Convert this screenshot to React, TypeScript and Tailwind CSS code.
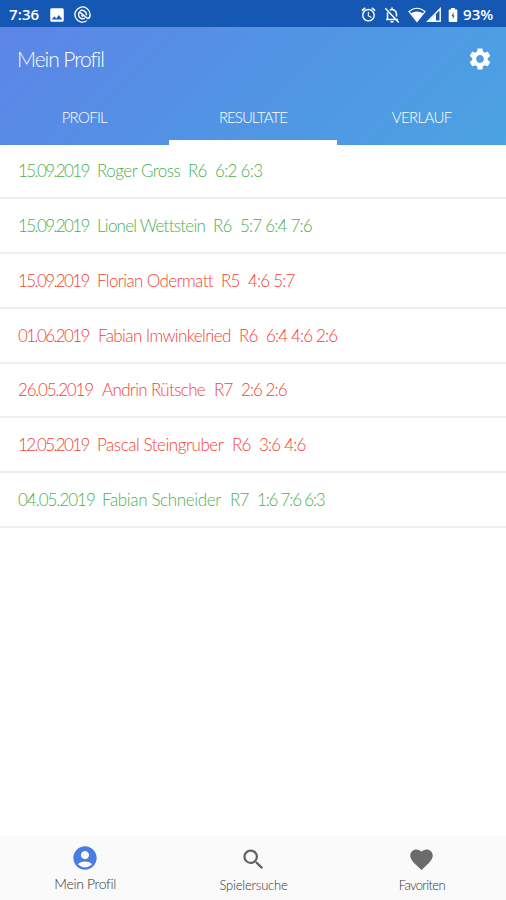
import clsx from 'clsx';
import {
  MdAccountCircle,
  MdAlarm,
  MdFavorite,
  MdImage,
  MdSearch,
  MdSettings,
} from 'react-icons/md';

interface Result {
  date: string;
  name: string;
  rank: string;
  score: string;
  won: boolean;
  // Column width and tracking, the row is set as running text
  dateClass: string;
  nameClass: string;
  scoreClass: string;
}

const results: Result[] = [
  { date: '15.09.2019', name: 'Roger Gross', rank: 'R6', score: '6:2 6:3', won: true, dateClass: 'w-[79px] tracking-[-1.6px]', nameClass: 'w-[91px] tracking-[-0.5px]', scoreClass: 'tracking-[-0.7px]' },
  { date: '15.09.2019', name: 'Lionel Wettstein', rank: 'R6', score: '5:7 6:4 7:6', won: true, dateClass: 'w-[79px] tracking-[-1.6px]', nameClass: 'w-[116px] tracking-[-0.75px]', scoreClass: 'tracking-[-0.8px]' },
  { date: '15.09.2019', name: 'Florian Odermatt', rank: 'R5', score: '4:6 5:7', won: false, dateClass: 'w-[79px] tracking-[-1.6px]', nameClass: 'w-[124px] tracking-[-0.6px]', scoreClass: 'tracking-[-0.8px]' },
  { date: '01.06.2019', name: 'Fabian Imwinkelried', rank: 'R6', score: '6:4 4:6 2:6', won: false, dateClass: 'w-[80px] tracking-[-1.6px]', nameClass: 'w-[141px] tracking-[-0.6px]', scoreClass: 'tracking-[-0.85px]' },
  { date: '26.05.2019', name: 'Andrin Rütsche', rank: 'R7', score: '2:6 2:6', won: false, dateClass: 'w-[84px] tracking-[-1.2px]', nameClass: 'w-[112px] tracking-[-0.65px]', scoreClass: 'tracking-[-0.95px]' },
  { date: '12.05.2019', name: 'Pascal Steingruber', rank: 'R6', score: '3:6 4:6', won: false, dateClass: 'w-[79px] tracking-[-1.6px]', nameClass: 'w-[135px] tracking-[-0.45px]', scoreClass: 'tracking-[-0.8px]' },
  { date: '04.05.2019', name: 'Fabian Schneider', rank: 'R7', score: '1:6 7:6 6:3', won: true, dateClass: 'w-[84px] tracking-[-1px]', nameClass: 'w-[128px] tracking-[-0.35px]', scoreClass: 'tracking-[-1.2px]' },
];

function StatusBar() {
  return (
    <div className="flex h-[27px] items-center bg-[#1558b3] pt-0.5 pl-[9px] pr-[11px] font-['Open_Sans',sans-serif] text-[15px] font-semibold text-white">
      <span className="w-[39px] tracking-[0.1px]">7:36</span>
      <MdImage className="size-[18px]" />
      <svg viewBox="0 0 18 18" className="ml-2 size-[17px]" fill="none" stroke="currentColor">
        <path d="M13.5 15.6A8 8 0 1 1 16.9 8" strokeWidth="1.4" />
        <path d="M16.9 8c.4 3-1 5-2.4 5.3L5.4 6M5 6.5v4a4.2 4.2 0 0 0 6.5 2.2M6.3 5A4.8 4.8 0 0 1 13.2 9.8" strokeWidth="1.5" />
        <path d="m7.8 9.8 2 1.5" strokeWidth="1.6" />
      </svg>
      <MdAlarm className="ml-auto size-[17px]" />
      <svg viewBox="0 0 24 24" className="ml-[6px] size-[18px]" fill="none" stroke="currentColor" strokeWidth="2">
        <path d="M6 8.5V18h12M9 5.5a6 6 0 0 1 9 5V14M4 18h16M3 3l18 19" />
        <path d="M10 21h4M12 2v3" />
      </svg>
      <svg viewBox="0 0 18 16" className="ml-[7px] h-4 w-[18px]">
        <path d="M1 4.5Q9-2 17 4.5L9 14.5Z" fill="none" stroke="currentColor" strokeWidth="1.1" />
        <path d="M2.8 6.2Q9 3 15.2 6.2L9 14.5Z" fill="currentColor" />
      </svg>
      <svg viewBox="0 0 16 16" className="size-4" fill="none" stroke="currentColor" strokeWidth="1.4">
        <path d="M1.8 14.2 14.2 1.8v12.4Z" />
        <path d="M3 14 10 7v7Z" fill="currentColor" stroke="none" />
      </svg>
      <svg viewBox="0 0 10 16" className="ml-[6px] h-4 w-[10px]">
        <path fill="currentColor" d="M3 1h4v1.5h1.5q.8 0 .8.8v11q0 .8-.8.8h-7q-.8 0-.8-.8v-11q0-.8.8-.8H3Z" />
        <path fill="#1558b3" d="M5.4 5 3.6 9.3h1.2v3L6.6 8.4H5.4Z" />
      </svg>
      <span className="ml-[5px] w-[32px] tracking-[0.1px]">93%</span>
    </div>
  );
}

function Header() {
  return (
    <header className="flex h-[117.5px] flex-col bg-[linear-gradient(135deg,#5c85e7_0%,#5194e4_50%,#4ba3e2_100%)] text-white">
      <div className="flex h-[63px] items-center justify-between pl-[17px] pr-[13px]">
        <h1 className="text-[21px] font-light tracking-[-1.05px]">Mein Profil</h1>
        <MdSettings className="size-[26px]" />
      </div>
      <nav className="grid flex-1 grid-cols-3 text-[15px] font-light">
        <div className="flex items-center justify-center tracking-[-0.7px]">PROFIL</div>
        <div className="flex items-center justify-center border-b-[5px] border-white pt-[5px] tracking-[-0.95px]">RESULTATE</div>
        <div className="flex items-center justify-center tracking-[-0.6px]">VERLAUF</div>
      </nav>
    </header>
  );
}

function ResultRow({ result }: { result: Result }) {
  return (
    <li
      className={clsx(
        'flex h-[54.8px] items-center border-b-2 border-[#eeeeee] pl-[18px] text-[17px] font-light whitespace-pre',
        result.won ? 'text-[#4caf50]' : 'text-[#f44336]'
      )}
    >
      <span className={result.dateClass}>{result.date}</span>
      <span className={result.nameClass}>{result.name}</span>
      <span className="w-[27px] tracking-[-0.8px]">{result.rank}</span>
      <span className={result.scoreClass}>{result.score}</span>
    </li>
  );
}

export default function App() {
  return (
    <div className="flex h-[900px] w-[506px] flex-col overflow-hidden bg-white font-['Lato',sans-serif]">
      <StatusBar />
      <Header />
      <ul className="flex-1">
        {results.map(result => (
          <ResultRow key={result.date + result.name} result={result} />
        ))}
      </ul>

      {/* Bottom navigation */}
      <nav className="grid h-16 grid-cols-3 bg-[#fafafa] pl-px font-light text-[#333333]">
        <div className="flex flex-col items-center pt-2">
          <MdAccountCircle className="size-7 text-[#4a7de4]" />
          <span className="mt-[2px] text-[14px] leading-5 tracking-[-0.35px]">Mein Profil</span>
        </div>
        <div className="flex flex-col items-center pt-[10px]">
          <MdSearch className="size-[27px] text-[#616161]" />
          <span className="mt-[2px] text-[13px] leading-5 tracking-[-0.2px]">Spielersuche</span>
        </div>
        <div className="flex flex-col items-center pt-[10px]">
          <MdFavorite className="size-[27px] text-[#6b6b6b]" />
          <span className="mt-[2px] text-[13px] leading-5 tracking-[-0.65px]">Favoriten</span>
        </div>
      </nav>
    </div>
  );
}
